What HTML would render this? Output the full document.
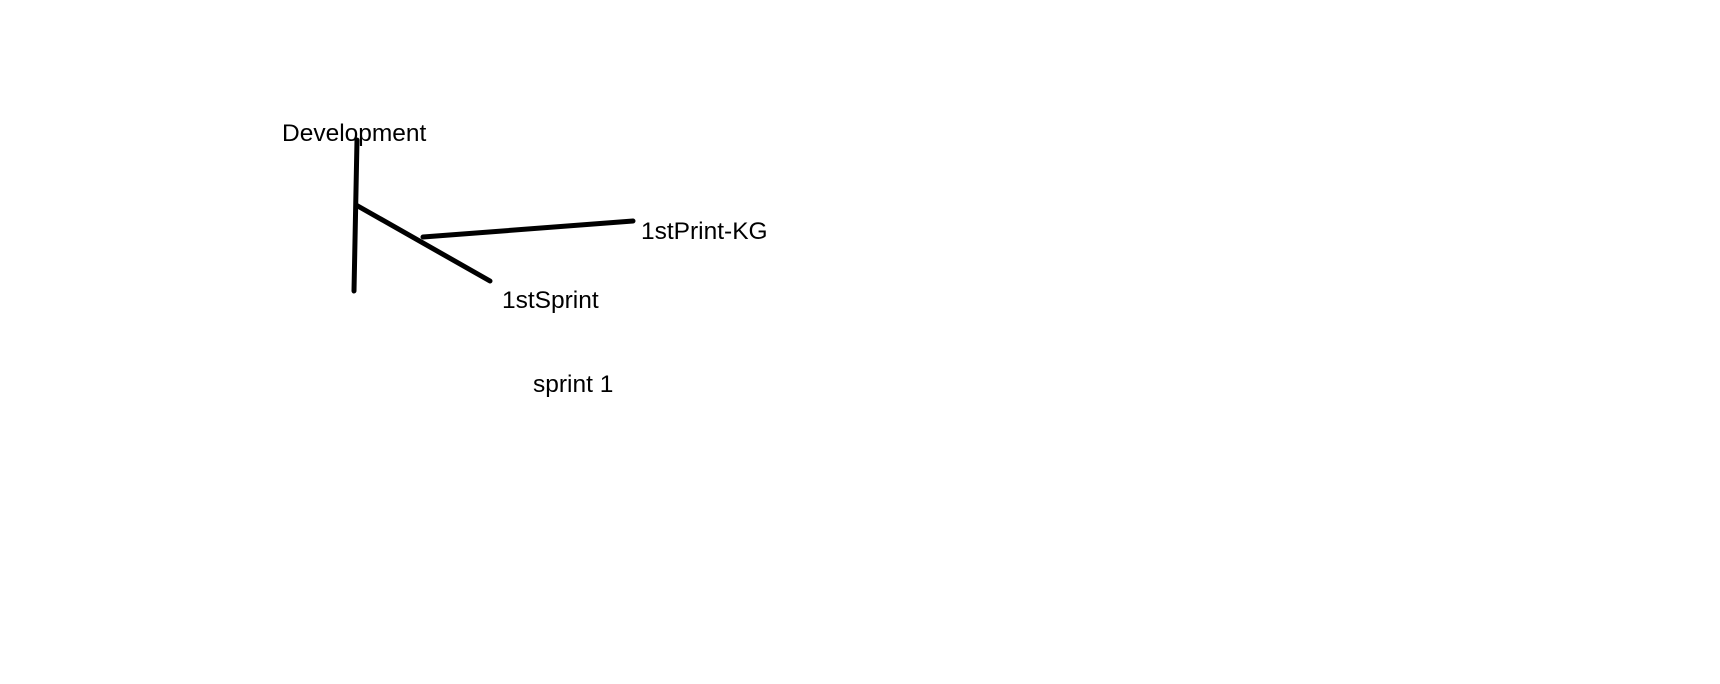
<!DOCTYPE html>
<html><head><meta charset="utf-8"><style>
html,body{margin:0;padding:0;background:#fff;width:1720px;height:684px;overflow:hidden}
svg{position:absolute;left:0;top:0}
text{font-family:"Liberation Sans",sans-serif;font-size:24.5px;fill:#000}
</style></head><body>
<svg width="1720" height="684" viewBox="0 0 1720 684">
<g stroke="#000" stroke-width="5" stroke-linecap="round" fill="none">
<path d="M357 140 L354 291"/>
<path d="M356 205 L490 281"/>
<path d="M423 237 L633 221"/>
</g>
<text x="282" y="141">Development</text>
<text x="641" y="239">1stPrint-KG</text>
<text x="502" y="308">1stSprint</text>
<text x="533" y="392">sprint 1</text>
</svg>
</body></html>
